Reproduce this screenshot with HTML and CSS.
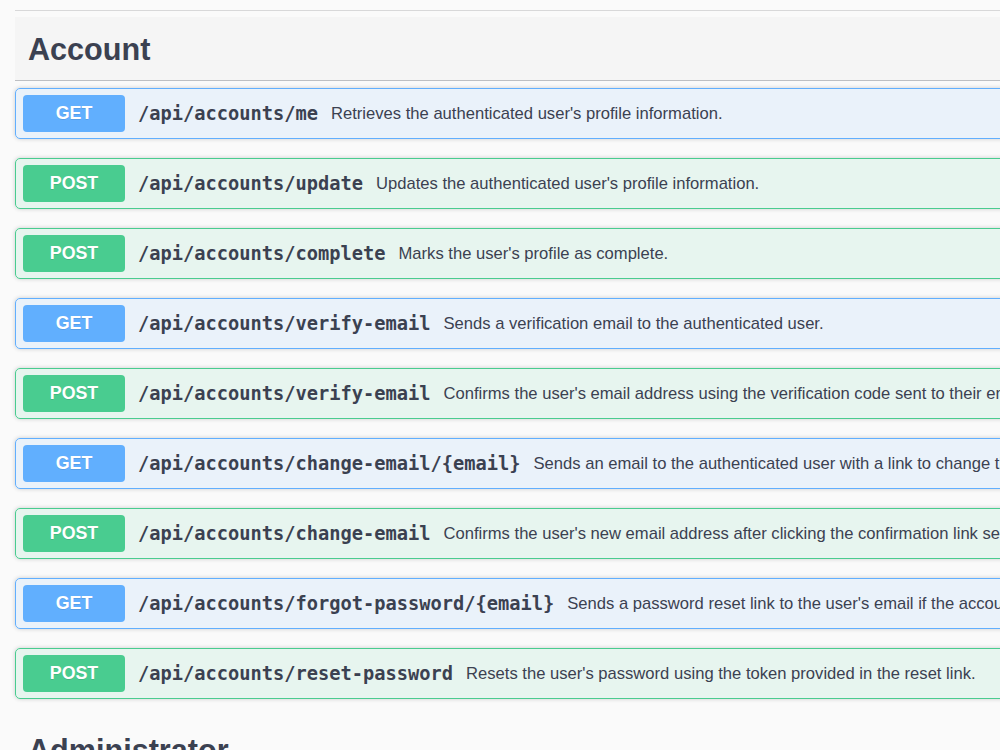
FILE: index.html
```html
<!DOCTYPE html>
<html lang="en">
<head>
    <meta charset="UTF-8">
    <meta name="viewport" content="width=device-width, initial-scale=1.0">
    <title>API</title>
    <link rel="stylesheet" href="styles.css">
</head>
<body>
    <div class="wrapper">
        <div class="prev-section"></div>

        <!-- Account -->
        <section class="tag-section">
            <h3 class="tag-header hovered">Account</h3>

            <div class="opblock opblock-get">
                <span class="method">GET</span>
                <span class="path">/api/accounts/me</span>
                <span class="description">Retrieves the authenticated user's profile information.</span>
            </div>
            <div class="opblock opblock-post">
                <span class="method">POST</span>
                <span class="path">/api/accounts/update</span>
                <span class="description">Updates the authenticated user's profile information.</span>
            </div>
            <div class="opblock opblock-post">
                <span class="method">POST</span>
                <span class="path">/api/accounts/complete</span>
                <span class="description">Marks the user's profile as complete.</span>
            </div>
            <div class="opblock opblock-get">
                <span class="method">GET</span>
                <span class="path">/api/accounts/verify-email</span>
                <span class="description">Sends a verification email to the authenticated user.</span>
            </div>
            <div class="opblock opblock-post">
                <span class="method">POST</span>
                <span class="path">/api/accounts/verify-email</span>
                <span class="description">Confirms the user's email address using the verification code sent to their email.</span>
            </div>
            <div class="opblock opblock-get">
                <span class="method">GET</span>
                <span class="path">/api/accounts/change-email/{email}</span>
                <span class="description">Sends an email to the authenticated user with a link to change their email address.</span>
            </div>
            <div class="opblock opblock-post">
                <span class="method">POST</span>
                <span class="path">/api/accounts/change-email</span>
                <span class="description">Confirms the user's new email address after clicking the confirmation link sent to their email.</span>
            </div>
            <div class="opblock opblock-get">
                <span class="method">GET</span>
                <span class="path">/api/accounts/forgot-password/{email}</span>
                <span class="description">Sends a password reset link to the user's email if the account exists.</span>
            </div>
            <div class="opblock opblock-post">
                <span class="method">POST</span>
                <span class="path">/api/accounts/reset-password</span>
                <span class="description">Resets the user's password using the token provided in the reset link.</span>
            </div>
        </section>

        <!-- Administrator -->
        <section class="tag-section">
            <h3 class="tag-header">Administrator</h3>
        </section>
    </div>
</body>
</html>
```

FILE: styles.css
```css
html, body {
    overflow: hidden;
}

body {
    margin: 0;
    background-color: #fafafa;
    font-family: 'Liberation Sans', Arial, sans-serif;
    color: #3b4151;
}

.wrapper {
    width: 1400px;
    padding-left: 15px;
}

.prev-section {
    height: 10px;
    border-bottom: 1px solid #d8d8d9;
    margin-bottom: 6px;
}

.tag-header {
    margin: 0 0 7px 0;
    padding: 13px 25px 12px 13px;
    font-size: 30.6px;
    line-height: 38px;
    font-weight: bold;
    color: #3b4151;
    border-bottom: 1px solid rgba(59, 65, 81, 0.3);
}

.tag-header.hovered {
    background-color: rgba(0, 0, 0, 0.02);
}

.opblock {
    display: flex;
    align-items: center;
    padding: 6px 6px 6px 7px;
    margin-bottom: 19px;
    border: 1px solid #000;
    border-radius: 5px;
    box-shadow: 0 0 4px rgba(0, 0, 0, 0.19);
}

.opblock-get {
    background-color: rgba(97, 175, 254, 0.1);
    border-color: #61affe;
}

.opblock-post {
    background-color: rgba(73, 204, 144, 0.1);
    border-color: #49cc90;
}

.method {
    flex: none;
    width: 102px;
    height: 37px;
    line-height: 37px;
    text-align: center;
    font-size: 17.8px;
    font-weight: bold;
    color: #ffffff;
    border-radius: 4px;
    text-shadow: 0 1px 0 rgba(0, 0, 0, 0.1);
}

.opblock-get .method {
    background-color: #61affe;
}

.opblock-post .method {
    background-color: #49cc90;
}

.path {
    flex: none;
    padding: 0 13px;
    font-family: 'DejaVu Sans Mono', monospace;
    font-size: 18.7px;
    font-weight: bold;
    color: #3b4151;
}

.description {
    font-size: 16.6px;
    color: #3b4151;
    white-space: nowrap;
}
```
